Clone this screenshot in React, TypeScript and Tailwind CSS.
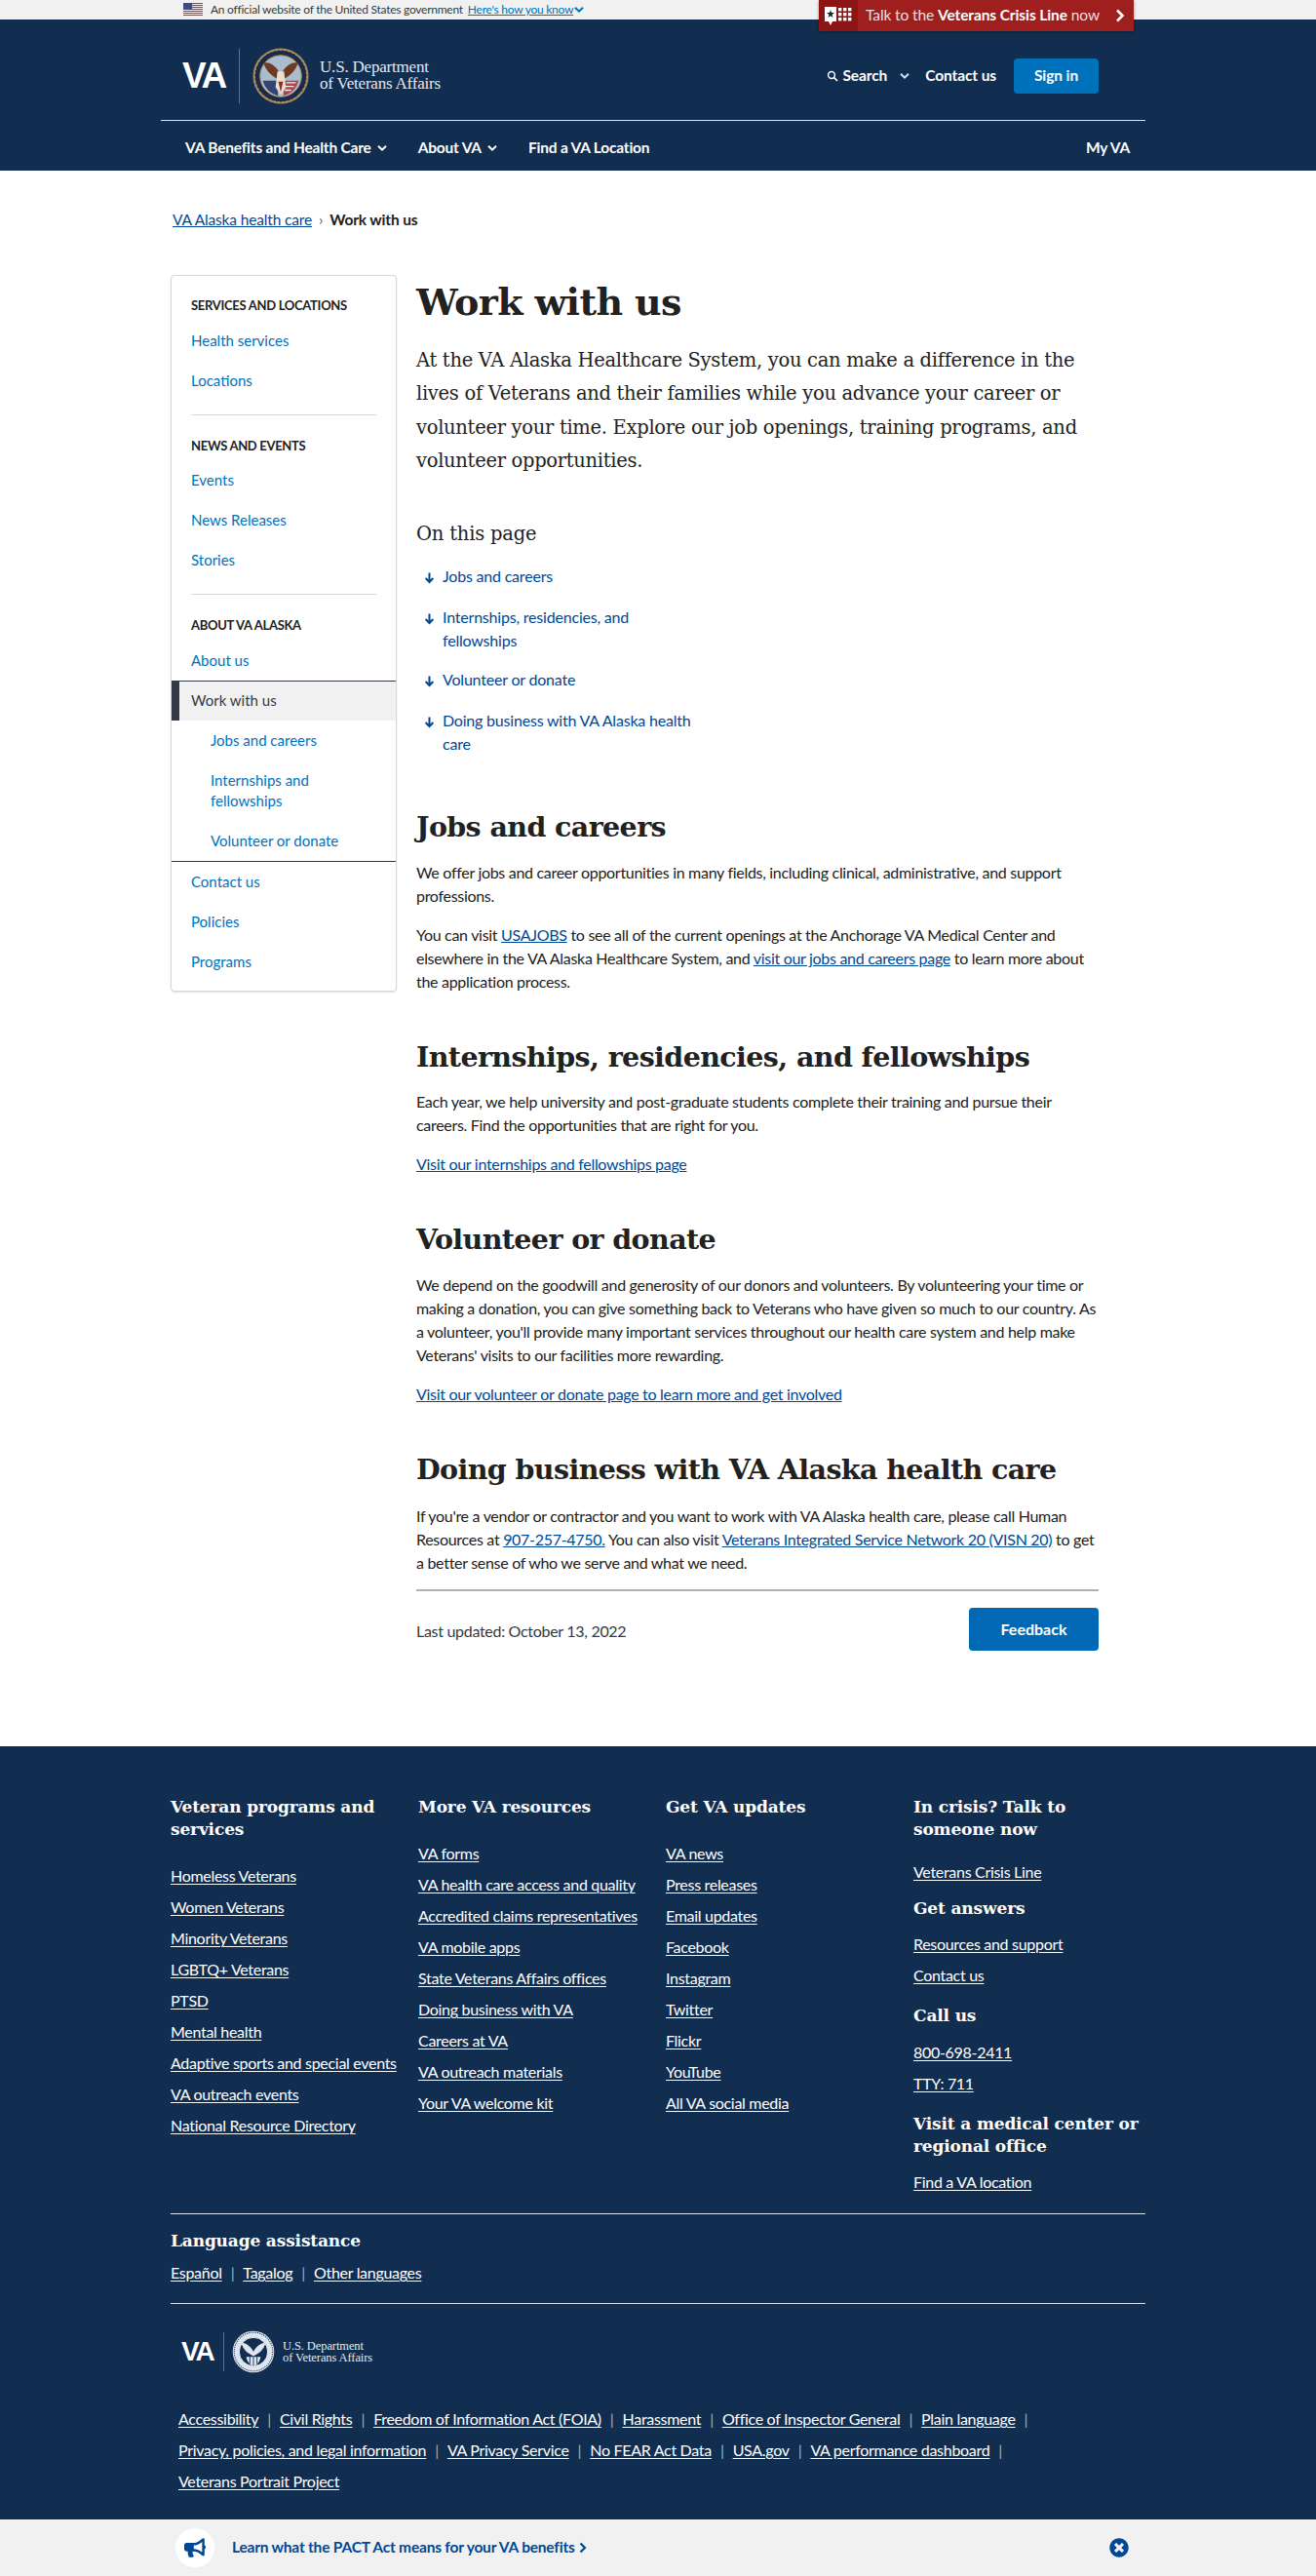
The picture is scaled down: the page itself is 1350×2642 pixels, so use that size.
import React from "react";
import { FaBullhorn, FaTimesCircle } from "react-icons/fa";

const sans = "font-['Lato','Liberation_Sans',sans-serif]";
const serif = "font-['DejaVu_Serif',serif]";

function Flag() {
  return (
    <svg width="20" height="14" viewBox="0 0 20 14">
      <rect width="20" height="14" fill="#fff" />
      {[0, 2, 4, 6, 8, 10, 12].map((y) => (
        <rect key={y} y={y} width="20" height="1.1" fill="#c8312f" />
      ))}
      <rect width="9" height="7" fill="#3a4a8c" />
    </svg>
  );
}

function Seal({ size, mono }: { size: number; mono?: boolean }) {
  if (mono) {
    return (
      <svg width={size} height={size} viewBox="0 0 60 60" className="shrink-0">
        <circle cx="30" cy="30" r="29" fill="#dfe5ee" />
        <circle cx="30" cy="30" r="27" fill="none" stroke="#112e51" strokeWidth="1.4" strokeDasharray="1.5 1.5" />
        <circle cx="30" cy="30" r="20" fill="#112e51" stroke="#fff" strokeWidth="1.2" />
        <path d="M30 36 C23 33 15 27 13 17 C20 18 27 23 30 30 C33 23 40 18 47 17 C45 27 37 33 30 36Z" fill="#dfe5ee" />
        <path d="M20 37 H40 C39 44 35 48 30 50 C25 48 21 44 20 37Z" fill="#dfe5ee" />
        <path d="M30 37 V50 M25 37 V47 M35 37 V47" stroke="#112e51" strokeWidth="1.2" />
      </svg>
    );
  }
  return (
    <svg width={size} height={size} viewBox="0 0 60 60" className="shrink-0">
      <circle cx="30" cy="30" r="29.5" fill="#a88a55" />
      <circle cx="30" cy="30" r="27.5" fill="#1c2b4a" />
      <circle cx="30" cy="30" r="27.5" fill="none" stroke="#b9a06e" strokeWidth="1" strokeDasharray="2 2.4" />
      <circle cx="30" cy="30" r="22" fill="#a9bdcf" stroke="#a88a55" strokeWidth="1" />
      <path d="M30 35 C22 31 13 24 12 16 C19 14 27 21 30 29 C33 21 41 14 48 16 C47 24 38 31 30 35Z" fill="#6d3b22" />
      <path d="M11 35 H27 V51 C19 49 13 43 11 35Z" fill="#33456e" />
      <path d="M33 35 H49 C47 43 41 49 33 51Z" fill="#b3404a" />
      <path d="M36 37 H46 M35 41 H44 M34 45 H41" stroke="#eee" strokeWidth="1.3" />
      <path d="M26.5 25 L33.5 25 L35.5 42 L30 50 L24.5 42Z" fill="#e9dfcc" />
      <path d="M27.5 36 H32.5 L30 47Z" fill="#8a2c2c" />
    </svg>
  );
}

function VaLogo({ small }: { small?: boolean }) {
  return (
    <div className="flex items-center">
      <span className={`font-['Liberation_Sans',sans-serif] font-bold text-white ${small ? "w-[34px] text-[28px] tracking-[-2px]" : "w-[47px] text-[37px] tracking-[-2.5px]"}`}>VA</span>
      <div className={`w-px bg-[#5b7290] ${small ? "ml-[9px] h-[40px]" : "ml-[11px] h-[56px]"}`} />
      <div className={small ? "ml-[8px]" : "ml-[13px]"}><Seal size={small ? 44 : 58} mono={small} /></div>
      <div className={`font-['Liberation_Serif',serif] text-[#e4e8ee] ${small ? "ml-[8px] text-[12.5px] leading-[12px] tracking-[-0.1px]" : "ml-[11px] text-[17px] leading-[16.5px] tracking-[-0.2px]"}`}>
        <div>U.S. Department</div>
        <div>of Veterans Affairs</div>
      </div>
    </div>
  );
}

function Chevron({ className = "" }: { className?: string }) {
  return (
    <svg width="10" height="8" viewBox="0 0 10 7" className={className}>
      <path d="M1 1.2 L5 5.2 L9 1.2" fill="none" stroke="currentColor" strokeWidth="2" />
    </svg>
  );
}

function Header() {
  return (
    <header>
      <div className="relative h-[20px] bg-[#f1f1f1]">
        <div className="flex h-full items-center gap-[6px] pl-[188px] text-[12px] text-[#323a45]">
          <Flag />
          <span className="ml-[2px] tracking-[-0.25px]">An official website of the United States government</span>
          <span className="-ml-[1px] text-[#0071bb] underline tracking-[-0.25px]">Here's how you know</span>
          <Chevron className="-ml-[5px] text-[#0071bb]" />
        </div>
        <div className="absolute left-[840px] top-0 z-10 flex h-[32px] w-[323px] items-center bg-[#9f1e1e] shadow-[0_1px_3px_rgba(0,0,0,0.4)]">
          <div className="flex h-full w-[40px] items-center justify-center bg-[#8c1414]">
            <svg width="30" height="24" viewBox="0 0 30 24">
              <path d="M1 3 H13 V18 H9 L7 22 L5 18 H1Z" fill="#fff" />
              <path d="M7 6 L8 9 H11 L8.6 11 L9.4 14 L7 12.2 L4.6 14 L5.4 11 L3 9 H6Z" fill="#222" />
              {[4, 9, 14].map((y) => [15, 20, 25].map((x) => <rect key={`${x}${y}`} x={x} y={y} width="3.4" height="3.4" fill="#fff" />))}
            </svg>
          </div>
          <span className="ml-[8px] text-[15.5px] tracking-[-0.1px] text-[#f3dede]">
            Talk to the <b className="font-bold text-white">Veterans Crisis Line</b> now
          </span>
          <svg width="10" height="14" viewBox="0 0 10 14" className="ml-auto mr-[9px]">
            <path d="M2 1.5 L7.5 7 L2 12.5" fill="none" stroke="#fff" strokeWidth="2.6" />
          </svg>
        </div>
      </div>
      <div className="h-[155px] bg-[#112e51]">
        <div className="ml-[165px] w-[1010px]">
          <div className="flex h-[104px] items-center justify-between border-b border-[#d7e4ef] pl-[22px] pr-[48px] pt-[12px]">
            <VaLogo />
            <div className="flex items-center text-[15.5px] font-bold tracking-[-0.1px] text-white">
              <svg width="12" height="12" viewBox="0 0 12 12" className="mr-[4px]">
                <circle cx="5" cy="5" r="3.4" fill="none" stroke="#fff" strokeWidth="1.5" />
                <path d="M7.5 7.5 L11 11" stroke="#fff" strokeWidth="1.7" />
              </svg>
              <span>Search</span>
              <Chevron className="ml-[13px] text-[#cfe0f0]" />
              <span className="ml-[16px]">Contact us</span>
              <span className="ml-[18px] flex h-[36px] w-[87px] items-center justify-center rounded-[4px] bg-[#0071bb]">Sign in</span>
            </div>
          </div>
          <div className="flex h-[50px] items-center pl-[25px] pr-[16px] pt-[5px] text-[15.5px] font-bold tracking-[-0.2px] text-white">
            <span>VA Benefits and Health Care</span>
            <Chevron className="ml-[6px]" />
            <span className="ml-[32px]">About VA</span>
            <Chevron className="ml-[6px]" />
            <span className="ml-[32px]">Find a VA Location</span>
            <span className="ml-auto">My VA</span>
          </div>
        </div>
      </div>
    </header>
  );
}

function SideHead({ children }: { children: React.ReactNode }) {
  return <div className="px-[20px] text-[13px] font-bold uppercase leading-[18px] tracking-[-0.3px] text-[#212121]">{children}</div>;
}
function SideLink({ children, indent }: { children: React.ReactNode; indent?: boolean }) {
  return <div className={`py-[10px] text-[15px] leading-[21px] text-[#0071bb] ${indent ? "pl-[40px] pr-[50px]" : "pl-[20px]"}`}>{children}</div>;
}

function Sidebar() {
  return (
    <aside className="h-[735px] w-[232px] shrink-0 rounded-[4px] border border-[#d6d7d9] pt-[21px] shadow-[0_1px_2px_rgba(0,0,0,0.12)]">
      <SideHead>Services and locations</SideHead>
      <div className="mt-[6.5px]">
        <SideLink>Health services</SideLink>
        <SideLink>Locations</SideLink>
      </div>
      <div className="mx-[20px] mb-[22px] mt-[14px] h-px bg-[#d6d7d9]" />
      <SideHead>News and events</SideHead>
      <div className="mt-[6.5px]">
        <SideLink>Events</SideLink>
        <SideLink>News Releases</SideLink>
        <SideLink>Stories</SideLink>
      </div>
      <div className="mx-[20px] mb-[22px] mt-[14px] h-px bg-[#d6d7d9]" />
      <SideHead>About VA Alaska</SideHead>
      <div className="mt-[6.5px]">
        <SideLink>About us</SideLink>
        <div className="border-y border-[#323a45]">
          <div className="flex h-[40px] items-center border-l-[8px] border-[#323a45] bg-[#f1f1f1] pl-[12px] text-[15px] text-[#323a45]">Work with us</div>
          <SideLink indent>Jobs and careers</SideLink>
          <SideLink indent>Internships and fellowships</SideLink>
          <SideLink indent>Volunteer or donate</SideLink>
        </div>
        <SideLink>Contact us</SideLink>
        <SideLink>Policies</SideLink>
        <SideLink>Programs</SideLink>
      </div>
    </aside>
  );
}

function Anchor({ children, className = "" }: { children: React.ReactNode; className?: string }) {
  return (
    <li className={`flex gap-[8px] pl-[8px] text-[16px] leading-[24px] tracking-[-0.2px] text-[#004795] ${className}`}>
      <svg width="11" height="13" viewBox="0 0 12 13" className="mt-[7px] shrink-0">
        <path d="M6 1 V11 M1.8 7 L6 11.4 L10.2 7" fill="none" stroke="#004795" strokeWidth="2.2" />
      </svg>
      <span>{children}</span>
    </li>
  );
}

function H2({ children, className = "" }: { children: React.ReactNode; className?: string }) {
  return <h2 className={`${serif} text-[28.5px] font-bold leading-[36px] tracking-[-0.6px] text-[#212121] ${className}`}>{children}</h2>;
}
function P({ children, className = "" }: { children: React.ReactNode; className?: string }) {
  return <p className={`text-[16px] leading-[24px] tracking-[-0.3px] text-[#212121] ${className}`}>{children}</p>;
}
function A({ children }: { children: React.ReactNode }) {
  return <span className="text-[#004795] underline">{children}</span>;
}

function Main() {
  return (
    <main className="w-[700px] pt-[4px]">
      <h1 className={`${serif} text-[38px] font-bold leading-[48px] tracking-[-0.6px] text-[#212121]`}>Work with us</h1>
      <p className={`${serif} mt-[19px] w-[690px] text-[19.5px] leading-[34.3px] tracking-[-0.3px] text-[#212121]`}>
        At the VA Alaska Healthcare System, you can make a difference in the lives of Veterans and their families while you advance your career or volunteer your time. Explore our job openings, training programs, and volunteer opportunities.
      </p>
      <h3 className={`${serif} mt-[43px] text-[19.5px] leading-[30px] tracking-[-0.2px] text-[#212121]`}>On this page</h3>
      <ul className="mt-[16px] w-[282px]">
        <Anchor>Jobs and careers</Anchor>
        <Anchor className="mt-[18px]">Internships, residencies, and fellowships</Anchor>
        <Anchor className="mt-[16px]">Volunteer or donate</Anchor>
        <Anchor className="mt-[18px]">Doing business with VA Alaska health care</Anchor>
      </ul>
      <H2 className="mt-[55px]">Jobs and careers</H2>
      <P className="mt-[17px]">We offer jobs and career opportunities in many fields, including clinical, administrative, and support professions.</P>
      <P className="mt-[16px]">
        You can visit <A>USAJOBS</A> to see all of the current openings at the Anchorage VA Medical Center and elsewhere in the VA Alaska Healthcare System, and <A>visit our jobs and careers page</A> to learn more about the application process.
      </P>
      <H2 className="mt-[47px]">Internships, residencies, and fellowships</H2>
      <P className="mt-[16px]">Each year, we help university and post-graduate students complete their training and pursue their careers. Find the opportunities that are right for you.</P>
      <P className="mt-[16px]"><A>Visit our internships and fellowships page</A></P>
      <H2 className="mt-[47px]">Volunteer or donate</H2>
      <P className="mt-[17px]">
        We depend on the goodwill and generosity of our donors and volunteers. By volunteering your time or making a donation, you can give something back to Veterans who have given so much to our country. As a volunteer, you'll provide many important services throughout our health care system and help make Veterans' visits to our facilities more rewarding.
      </P>
      <P className="mt-[16px]"><A>Visit our volunteer or donate page to learn more and get involved</A></P>
      <H2 className="mt-[47px]">Doing business with VA Alaska health care</H2>
      <P className="mt-[18px]">
        If you're a vendor or contractor and you want to work with VA Alaska health care, please call Human Resources at <A>907-257-4750.</A> You can also visit <A>Veterans Integrated Service Network 20 (VISN 20)</A> to get a better sense of who we serve and what we need.
      </P>
      <div className="mt-[15px] h-[2px] bg-[#aeb0b5]" />
      <div className="mt-[17px] flex items-start justify-between">
        <span className="mt-[12px] text-[16px] leading-[24px] tracking-[-0.3px] text-[#323a45]">Last updated: October 13, 2022</span>
        <span className="flex h-[44px] w-[133px] items-center justify-center rounded-[4px] bg-[#0068b5] text-[16px] font-bold text-white">Feedback</span>
      </div>
    </main>
  );
}

function FootHead({ children, className = "" }: { children: React.ReactNode; className?: string }) {
  return <h4 className={`${serif} text-[17px] font-bold leading-[23px] tracking-[-0.15px] text-white ${className}`}>{children}</h4>;
}
function FootLinks({ items }: { items: string[] }) {
  return (
    <ul className="flex flex-col gap-[8px]">
      {items.map((t) => (
        <li key={t} className="text-[16px] leading-[24px] tracking-[-0.3px] text-white underline decoration-1 underline-offset-2">{t}</li>
      ))}
    </ul>
  );
}
function Sep() {
  return <span className="mx-[9px] text-[#9fb0c4]">|</span>;
}

function Footer() {
  const row1 = ["Accessibility", "Civil Rights", "Freedom of Information Act (FOIA)", "Harassment", "Office of Inspector General", "Plain language"];
  const row2 = ["Privacy, policies, and legal information", "VA Privacy Service", "No FEAR Act Data", "USA.gov", "VA performance dashboard"];
  return (
    <footer className="h-[793px] bg-[#112e51] pt-[51px]">
      <div className="mx-auto w-[1000px]">
        <div className="grid h-[428px] grid-cols-[254px_254px_254px_238px]">
          <div className="pr-[15px]">
            <FootHead>Veteran programs and services</FootHead>
            <div className="mt-[24px]">
              <FootLinks items={["Homeless Veterans", "Women Veterans", "Minority Veterans", "LGBTQ+ Veterans", "PTSD", "Mental health", "Adaptive sports and special events", "VA outreach events", "National Resource Directory"]} />
            </div>
          </div>
          <div>
            <FootHead>More VA resources</FootHead>
            <div className="mt-[24px]">
              <FootLinks items={["VA forms", "VA health care access and quality", "Accredited claims representatives", "VA mobile apps", "State Veterans Affairs offices", "Doing business with VA", "Careers at VA", "VA outreach materials", "Your VA welcome kit"]} />
            </div>
          </div>
          <div>
            <FootHead>Get VA updates</FootHead>
            <div className="mt-[24px]">
              <FootLinks items={["VA news", "Press releases", "Email updates", "Facebook", "Instagram", "Twitter", "Flickr", "YouTube", "All VA social media"]} />
            </div>
          </div>
          <div>
            <FootHead className="w-[190px]">In crisis? Talk to someone now</FootHead>
            <div className="mt-[20px]"><FootLinks items={["Veterans Crisis Line"]} /></div>
            <FootHead className="mt-[14px]">Get answers</FootHead>
            <div className="mt-[13px]"><FootLinks items={["Resources and support", "Contact us"]} /></div>
            <FootHead className="mt-[18px]">Call us</FootHead>
            <div className="mt-[14px]"><FootLinks items={["800-698-2411", "TTY: 711"]} /></div>
            <FootHead className="mt-[18px]">Visit a medical center or regional office</FootHead>
            <div className="mt-[13px]"><FootLinks items={["Find a VA location"]} /></div>
          </div>
        </div>
        <div className="h-px bg-[#d7e4ef]" />
        <div className="h-[91px] pt-[16px]">
          <FootHead>Language assistance</FootHead>
          <div className="mt-[9px] text-[16px] leading-[24px] tracking-[-0.3px] text-white">
            <span className="underline underline-offset-2">Español</span><Sep /><span className="underline underline-offset-2">Tagalog</span><Sep /><span className="underline underline-offset-2">Other languages</span>
          </div>
        </div>
        <div className="h-px bg-[#d7e4ef]" />
        <div className="pl-[11px] pt-[27px]"><VaLogo small /></div>
        <div className="mt-[31px] pl-[8px] text-[16px] leading-[32px] tracking-[-0.3px] text-white">
          <div>{row1.map((t) => <React.Fragment key={t}><span className="underline underline-offset-2">{t}</span><Sep /></React.Fragment>)}</div>
          <div>{row2.map((t) => <React.Fragment key={t}><span className="underline underline-offset-2">{t}</span><Sep /></React.Fragment>)}</div>
          <div><span className="underline underline-offset-2">Veterans Portrait Project</span></div>
        </div>
      </div>
    </footer>
  );
}

function PactBar() {
  return (
    <div className="flex h-[58px] items-center bg-[#f1f1f1] pl-[180px] pr-[192px]">
      <div className="flex h-[40px] w-[40px] items-center justify-center rounded-full bg-white">
        <FaBullhorn size={22} color="#004795" />
      </div>
      <span className="ml-[18px] text-[15.5px] font-bold tracking-[-0.2px] text-[#004795]">Learn what the PACT Act means for your VA benefits</span>
      <svg width="8" height="12" viewBox="0 0 8 12" className="ml-[4px]">
        <path d="M1.5 1.5 L6 6 L1.5 10.5" fill="none" stroke="#004795" strokeWidth="2.2" />
      </svg>
      <FaTimesCircle size={20} color="#004795" className="ml-auto" />
    </div>
  );
}

export default function App() {
  return (
    <div className={`${sans} h-[2642px] w-[1350px] overflow-hidden bg-white`}>
      <Header />
      <div className="h-[1616px] pl-[175px]">
        <div className="pl-[2px] pt-[40px] text-[15.5px] leading-[20px] tracking-[-0.15px] text-[#212121]">
          <span className="text-[#004795] underline">VA Alaska health care</span>
          <span className="mx-[7px] text-[#5b616b]">›</span>
          <b className="font-bold">Work with us</b>
        </div>
        <div className="mt-[47px] flex gap-[20px]">
          <Sidebar />
          <Main />
        </div>
      </div>
      <Footer />
      <PactBar />
    </div>
  );
}
